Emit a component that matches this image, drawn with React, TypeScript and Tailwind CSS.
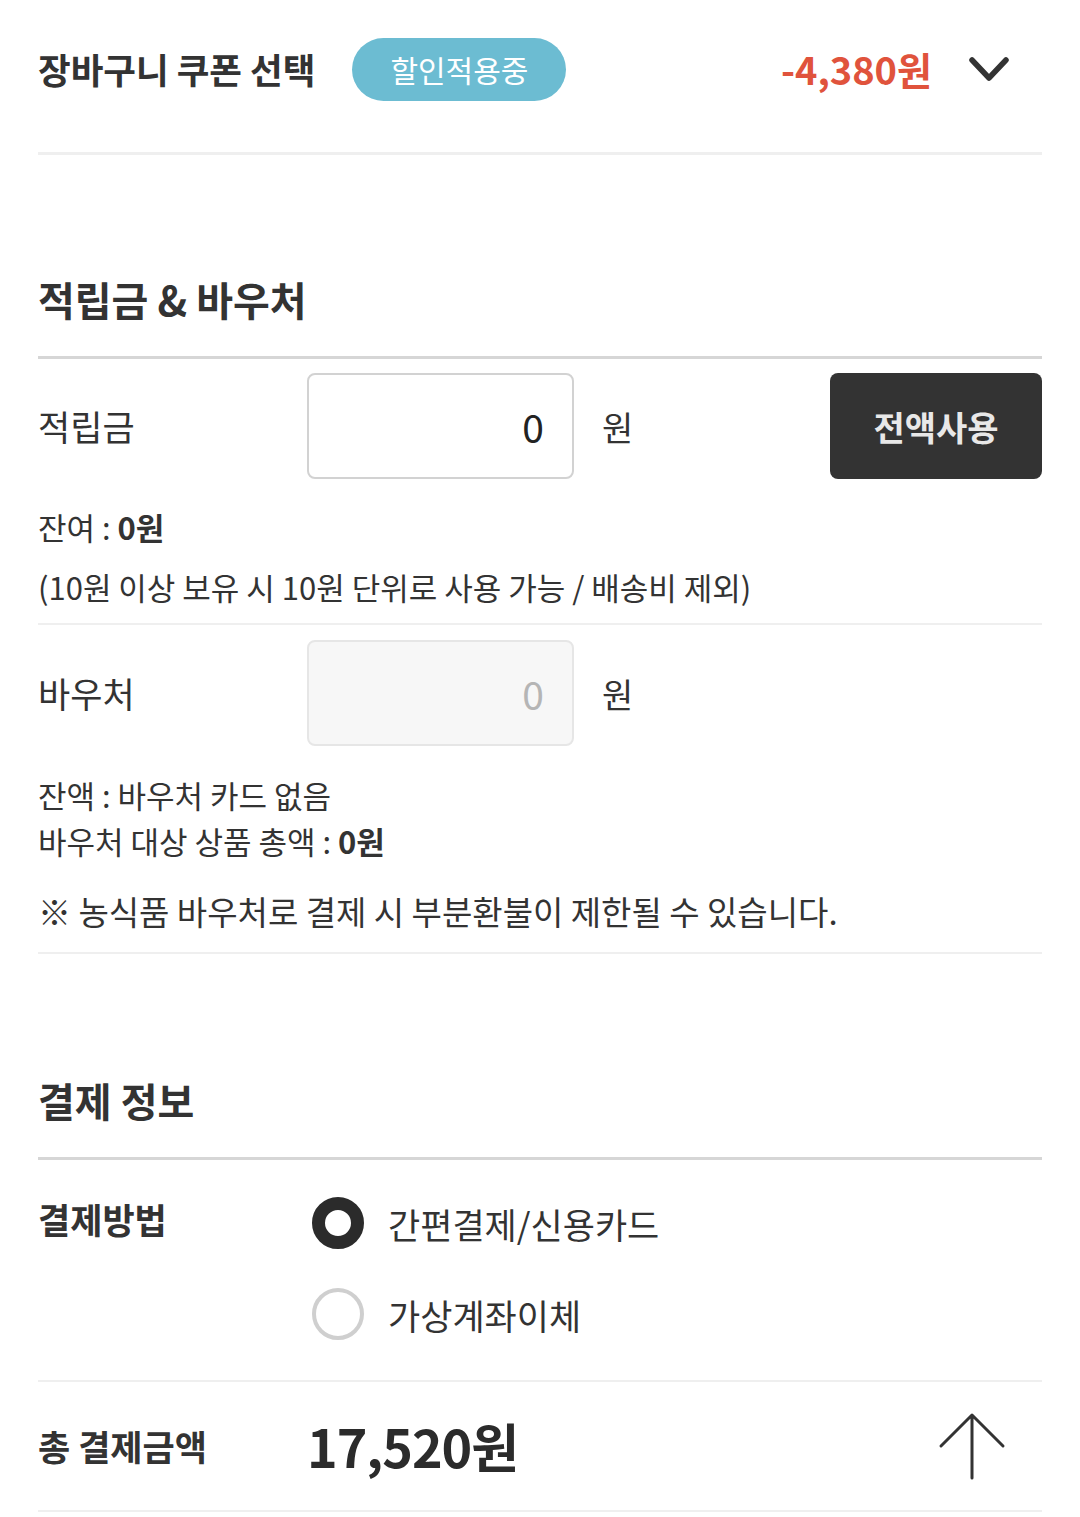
import React from 'react';

const font = { fontFamily: '"Noto Sans CJK KR", "Noto Sans", sans-serif' };

function ChevronDown() {
  return (
    <svg width="42" height="30" viewBox="0 0 42 30" fill="none">
      <path d="M4 6 L21 24 L38 6" stroke="#333" strokeWidth="5.5" strokeLinecap="round" strokeLinejoin="round" />
    </svg>
  );
}

function ArrowUp() {
  return (
    <svg width="68" height="68" viewBox="0 0 68 68" fill="none">
      <path d="M34 3 L34 66 M3 34 L34 3 L65 34" stroke="#333" strokeWidth="3" strokeLinecap="round" strokeLinejoin="round" />
    </svg>
  );
}

function Radio({ checked, label }: { checked?: boolean; label: string }) {
  return (
    <div className="flex items-center h-[52px]">
      <div
        className={
          checked
            ? 'w-[52px] h-[52px] rounded-full border-[13px] border-[#2b2b2b] box-border'
            : 'w-[52px] h-[52px] rounded-full border-[4px] border-[#cfcfcf] box-border'
        }
      />
      <span className="ml-[24px] text-[35px] text-[#333] leading-none">{label}</span>
    </div>
  );
}

export default function App() {
  return (
    <div className="w-[1080px] bg-white text-[#333]" style={font}>
      <div className="px-[38px]">
        {/* coupon row */}
        <div className="flex items-center h-[155px] pb-[14px] border-b-[3px] border-[#efefef]">
          <h2 className="text-[35.5px] font-bold leading-none">장바구니 쿠폰 선택</h2>
          <span className="ml-[37px] w-[214px] h-[63px] rounded-full bg-[#6cbcd2] text-white text-[30px] flex items-center justify-center">
            할인적용중
          </span>
          <span className="ml-auto text-[38px] font-bold text-[#e0533c] leading-none">-4,380원</span>
          <span className="ml-[36px] mr-[32px] flex">
            <ChevronDown />
          </span>
        </div>

        {/* point & voucher */}
        <div className="pt-[116px] pb-[29px] border-b-[3px] border-[#d6d6d6]">
          <h2 className="text-[40px] font-bold leading-[56px]">적립금 &amp; 바우처</h2>
        </div>

        <div className="pt-[14px] pb-[14px] border-b-[2px] border-[#efefef]">
          <div className="flex items-center h-[106px]">
            <span className="w-[269px] text-[35px]">적립금</span>
            <div className="w-[267px] h-[106px] rounded-[8px] border-[2px] border-[#d2d2d2] flex items-center justify-end pr-[28px] text-[39px] text-[#222]">
              0
            </div>
            <span className="ml-[28px] text-[34px]">원</span>
            <button className="ml-auto w-[212px] h-[106px] rounded-[8px] bg-[#333] text-[#e8e8e8] text-[34px] font-bold">
              전액사용
            </button>
          </div>
          <p className="mt-[26px] text-[31px] leading-[44px]">
            잔여 : <b className="font-bold">0원</b>
          </p>
          <p className="mt-[16px] text-[31px] leading-[44px]">(10원 이상 보유 시 10원 단위로 사용 가능 / 배송비 제외)</p>
        </div>

        <div className="pt-[15px] pb-[17px] border-b-[2px] border-[#efefef]">
          <div className="flex items-center h-[106px]">
            <span className="w-[269px] text-[35px]">바우처</span>
            <div className="w-[267px] h-[106px] rounded-[8px] border-[2px] border-[#e6e6e6] bg-[#f7f7f7] flex items-center justify-end pr-[28px] text-[39px] text-[#b5b5b5]">
              0
            </div>
            <span className="ml-[28px] text-[34px]">원</span>
          </div>
          <p className="mt-[26px] text-[31px] leading-[46px]">잔액 : 바우처 카드 없음</p>
          <p className="text-[31px] leading-[46px]">
            바우처 대상 상품 총액 : <b className="font-bold">0원</b>
          </p>
          <p className="mt-[23px] text-[33px] leading-[48px]">※ 농식품 바우처로 결제 시 부분환불이 제한될 수 있습니다.</p>
        </div>

        {/* payment info */}
        <div className="pt-[118px] pb-[29px] border-b-[3px] border-[#d6d6d6]">
          <h2 className="text-[40px] font-bold leading-[56px]">결제 정보</h2>
        </div>

        <div className="flex pt-[37px] pb-[40px] border-b-[2px] border-[#efefef]">
          <span className="w-[274px] text-[35px] font-bold leading-[44px]">결제방법</span>
          <div className="flex flex-col gap-[39px]">
            <Radio checked label="간편결제/신용카드" />
            <Radio label="가상계좌이체" />
          </div>
        </div>

        <div className="flex items-center h-[130px] border-b-[2px] border-[#efefef]">
          <span className="w-[269px] text-[35px] font-bold">총 결제금액</span>
          <span className="text-[52px] font-bold tracking-[-1px] text-[#2b2b2b]">17,520원</span>
          <span className="ml-auto mr-[36px] flex">
            <ArrowUp />
          </span>
        </div>
      </div>
    </div>
  );
}
